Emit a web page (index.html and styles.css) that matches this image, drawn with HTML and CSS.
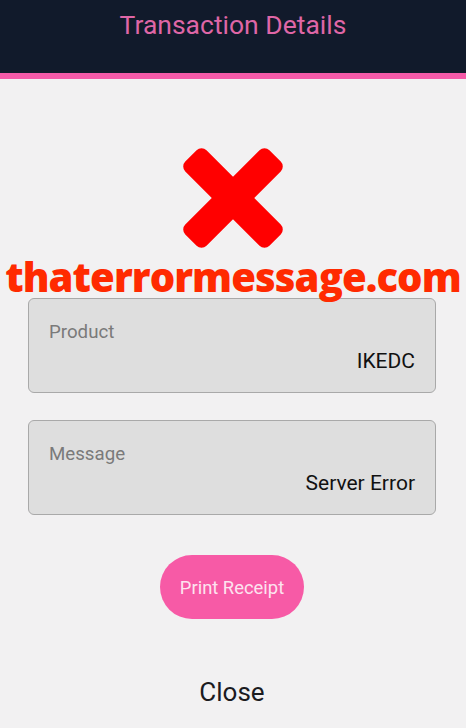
FILE: index.html
```html
<!DOCTYPE html>
<html>
<head>
<meta charset="utf-8">
<link rel="stylesheet" href="styles.css">
</head>
<body>
<div class="app">
  <header class="topbar">
    <h1 class="title">Transaction Details</h1>
  </header>
  <div class="accent"></div>
  <main class="content">
    <div class="status">
      <svg class="x-icon" width="106" height="106" viewBox="0 0 106 106">
        <g fill="#ff0000" transform="rotate(45 53 53)">
          <rect x="-6.5" y="38" width="119" height="30" rx="7"/>
          <rect x="38" y="-6.5" width="30" height="119" rx="7"/>
        </g>
      </svg>
    </div>
    <div class="card">
      <div class="label">Product</div>
      <div class="value">IKEDC</div>
    </div>
    <div class="card">
      <div class="label">Message</div>
      <div class="value">Server Error</div>
    </div>
    <button class="print">Print Receipt</button>
    <div class="close">Close</div>
  </main>
  <div class="watermark">thaterrormessage.com</div>
</div>
</body>
</html>
```

FILE: styles.css
```css
* { box-sizing: border-box; }
html, body { margin: 0; padding: 0; }
body {
  background: #f2f1f2;
  font-family: Roboto, "Noto Sans", sans-serif;
  width: 466px;
  height: 728px;
  overflow: hidden;
}
.app { position: relative; height: 728px; }
.topbar {
  background: #111a2b;
  height: 73px;
  display: flex;
  justify-content: center;
  padding-top: 8px;
}
.title {
  margin: 0;
  font-weight: 400;
  font-size: 26.5px;
  line-height: 34px;
  color: #df66a6;
}
.accent { height: 6px; background: #f55aa8; }
.content {
  display: flex;
  flex-direction: column;
  align-items: center;
  padding: 66px 30px 0 28px;
}
.status { height: 106px; margin-left: 2px; }
.x-icon { display: block; }
.card {
  width: 408px;
  background: #dedede;
  border: 1px solid #a9a9a9;
  border-radius: 6px;
  height: 95px;
  padding: 21px 20px 0 20px;
}
.status + .card { margin-top: 47px; }
.card + .card { margin-top: 27px; }
.label {
  font-size: 18.7px;
  line-height: 24px;
  color: #7a7a7a;
}
.value {
  text-align: right;
  font-size: 21px;
  line-height: 26px;
  color: #111;
  margin-top: 4px;
}
.print {
  margin-top: 40px;
  margin-left: 0;
  width: 144px;
  height: 64px;
  border: none;
  border-radius: 32px;
  background: #f75aa6;
  color: #fde3ef;
  font-family: Roboto, "Noto Sans", sans-serif;
  font-size: 18.4px;
}
.close {
  margin-top: 57px;
  margin-left: 0;
  font-size: 26px;
  line-height: 32px;
  color: #1b1b1f;
}
.watermark {
  position: absolute;
  left: 0;
  right: 0;
  top: 252px;
  text-align: center;
  font-family: "Open Sans", "DejaVu Sans", sans-serif;
  font-weight: 800;
  font-size: 40px;
  letter-spacing: -0.9px;
  line-height: 50px;
  color: #ff2a00;
}
```
